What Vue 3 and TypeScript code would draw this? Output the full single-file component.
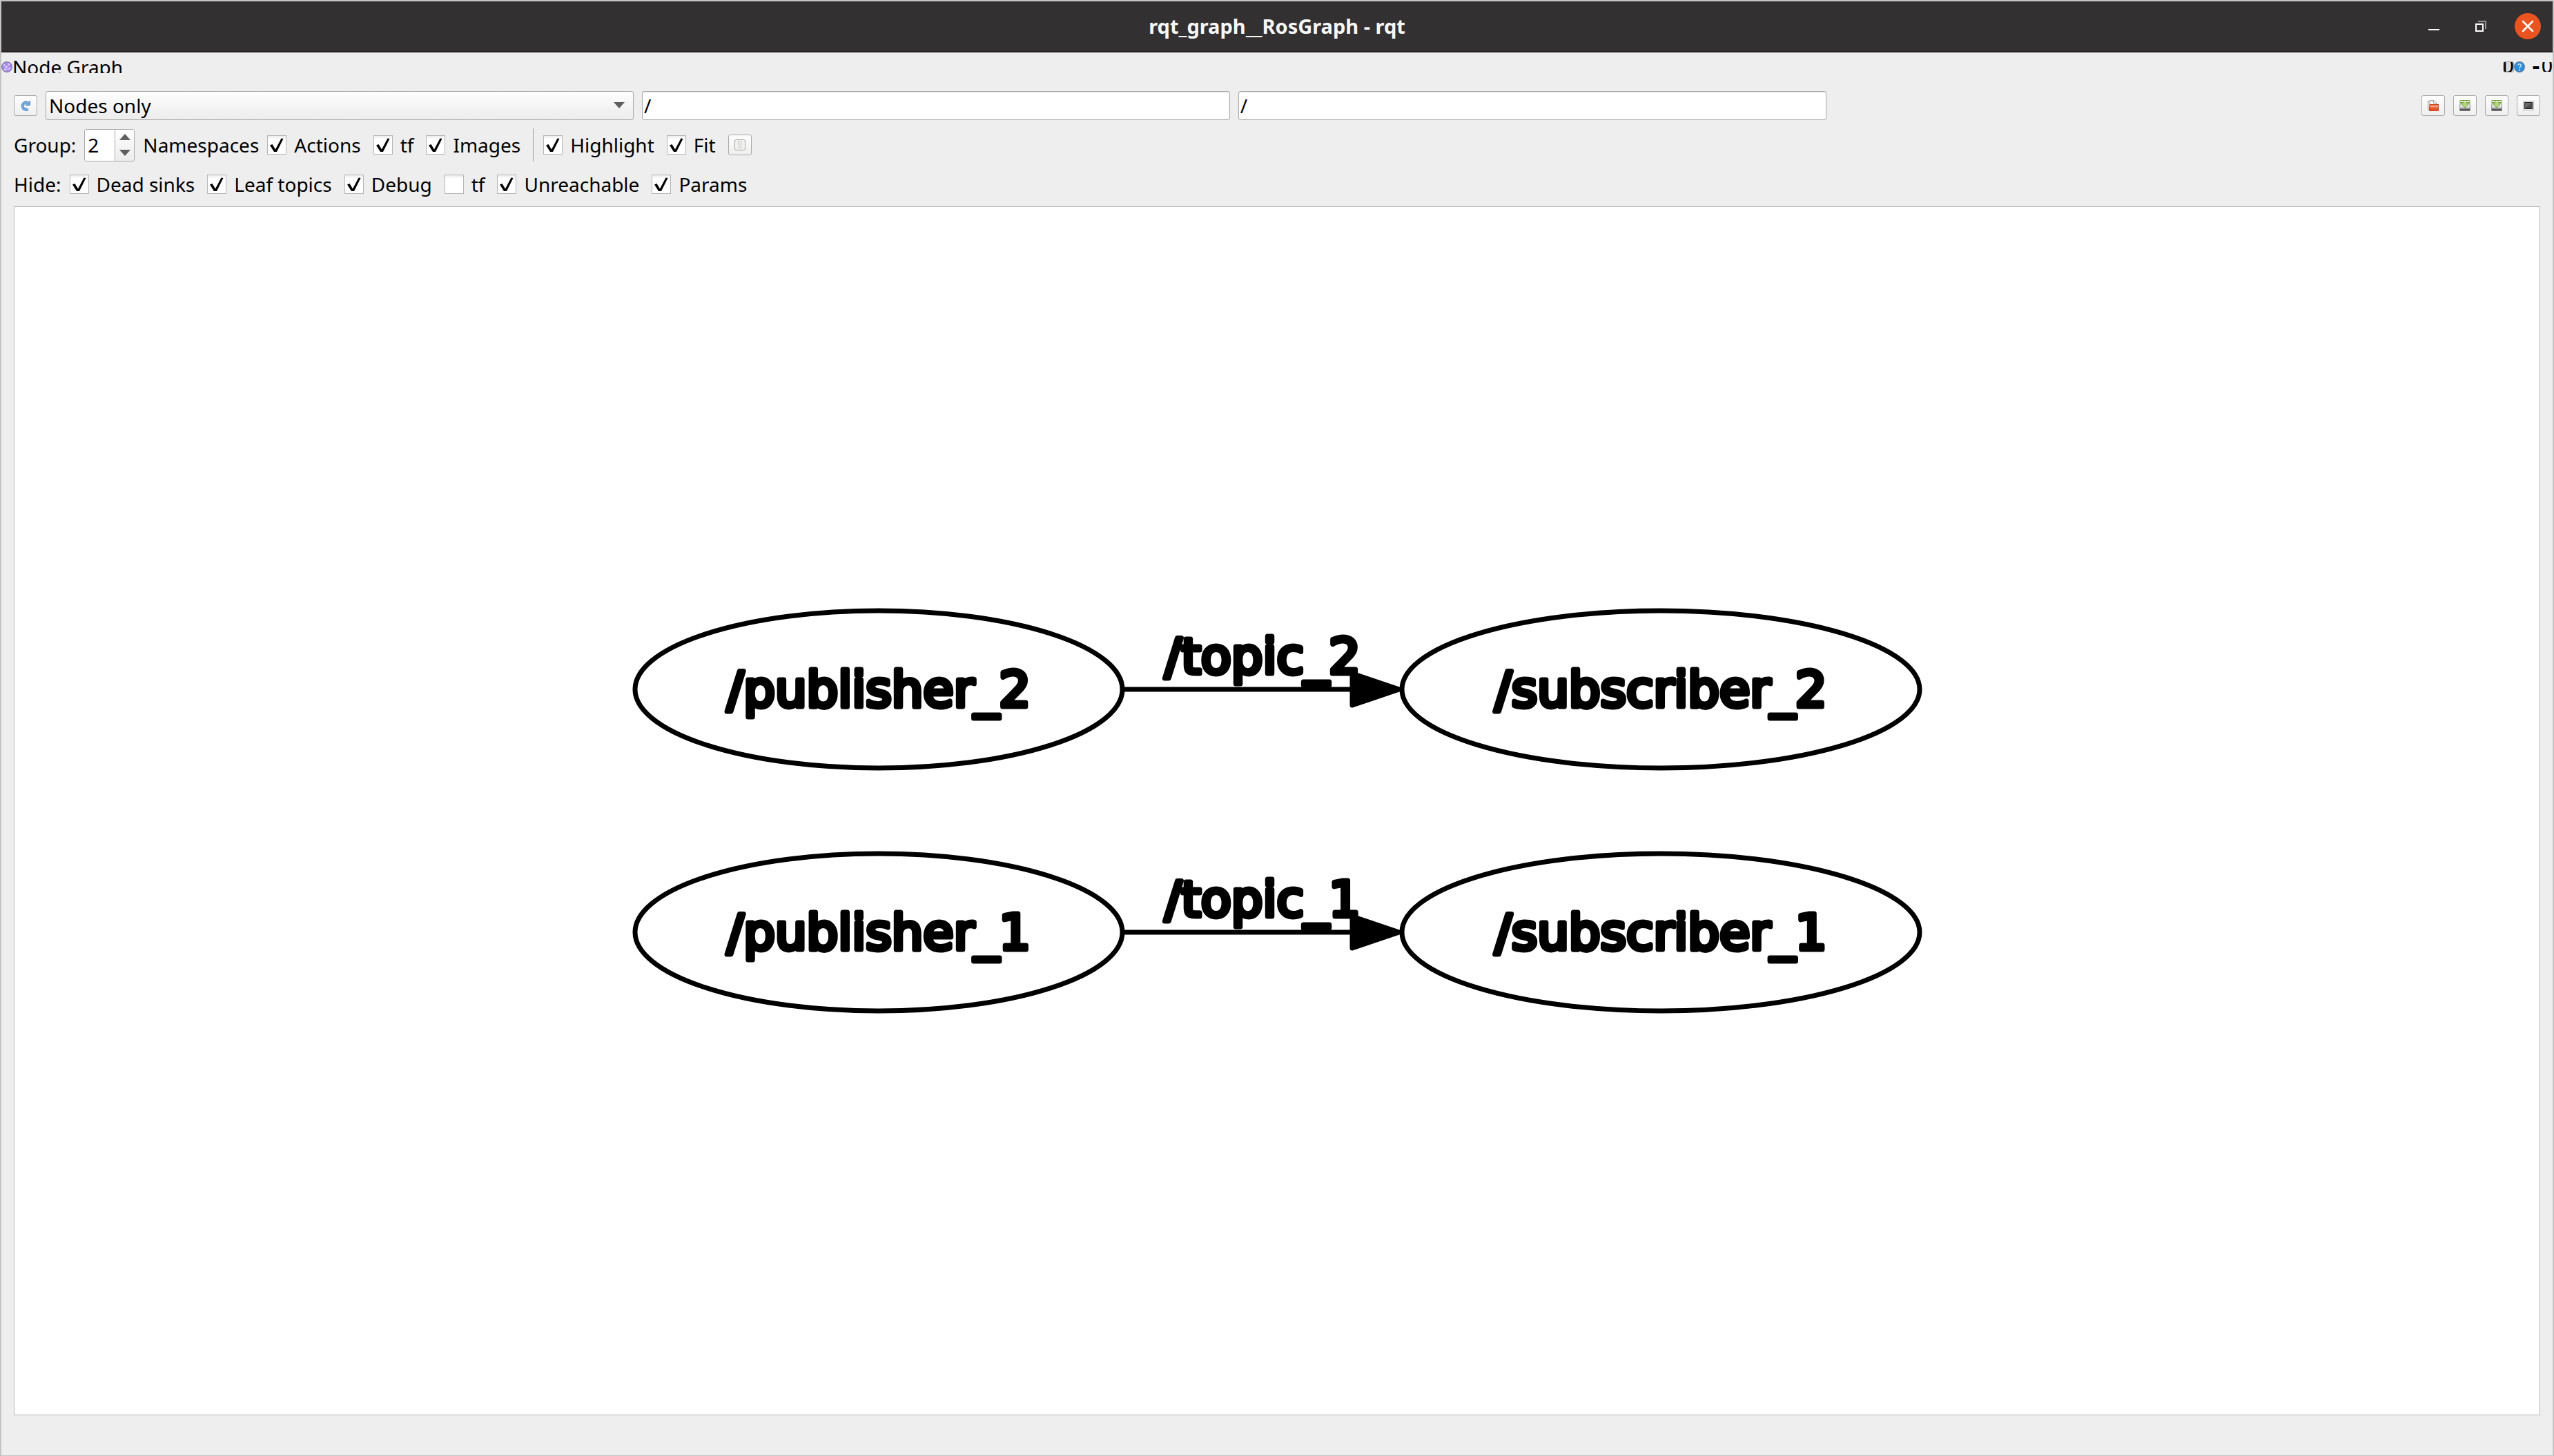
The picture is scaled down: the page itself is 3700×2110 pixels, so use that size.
<script setup lang="ts">
import { ref } from 'vue'

interface Option {
  id: string
  label: string
  checked: boolean
}

interface GraphRow {
  suffix: number
  cy: number
}

const view = ref('Nodes only')
const nodeFilter = ref('/')
const topicFilter = ref('/')
const depth = ref(2)

const groupOptions = ref<Option[]>([
  { id: 'actions', label: 'Actions', checked: true },
  { id: 'group-tf', label: 'tf', checked: true },
  { id: 'images', label: 'Images', checked: true },
])

const viewOptions = ref<Option[]>([
  { id: 'highlight', label: 'Highlight', checked: true },
  { id: 'fit', label: 'Fit', checked: true },
])

const hideOptions = ref<Option[]>([
  { id: 'dead-sinks', label: 'Dead sinks', checked: true },
  { id: 'leaf-topics', label: 'Leaf topics', checked: true },
  { id: 'debug', label: 'Debug', checked: true },
  { id: 'hide-tf', label: 'tf', checked: false },
  { id: 'unreachable', label: 'Unreachable', checked: true },
  { id: 'params', label: 'Params', checked: true },
])

const rows: GraphRow[] = [
  { suffix: 2, cy: 699 },
  { suffix: 1, cy: 1051 },
]
</script>

<template>
  <div class="window">
    <header class="titlebar">
      <h1>rqt_graph__RosGraph - rqt</h1>
      <div class="window-buttons">
        <button type="button" aria-label="Minimize">
          <svg width="38" height="38" viewBox="0 0 38 38"><path d="M11 23h16v2H11z" fill="#fff" /></svg>
        </button>
        <button type="button" aria-label="Restore">
          <svg width="38" height="38" viewBox="0 0 38 38">
            <path d="M15 12h11v11" fill="none" stroke="#969595" stroke-width="2" />
            <path d="M12 16h10v10H12z" fill="none" stroke="#fff" stroke-width="2" />
          </svg>
        </button>
        <button type="button" aria-label="Close">
          <svg width="38" height="38" viewBox="0 0 38 38">
            <circle cx="19" cy="19" r="19" fill="#e95420" />
            <path d="M12 12l14 14M26 12L12 26" stroke="#fff" stroke-width="2.6" stroke-linecap="round" />
          </svg>
        </button>
      </div>
    </header>

    <div class="dock">
      <svg class="dock-icon" width="16" height="16" viewBox="0 0 16 16">
        <circle cx="8" cy="8" r="7.4" fill="#a98bec" stroke="#8a80a8" stroke-width="1.2" />
        <path d="M3 5l4 3 5-4M7 8l-3 4M7 8l5 3M4 12l8-1" stroke="#d9c8fb" fill="none" />
        <g fill="#efe8ff">
          <circle cx="4" cy="5" r="1" /><circle cx="11" cy="4" r="1" /><circle cx="7" cy="8" r="1.3" />
          <circle cx="12" cy="10" r="1" /><circle cx="5" cy="12" r="1" />
        </g>
      </svg>
      <h2>Node Graph</h2>
      <div class="dock-buttons">
        <button type="button" class="framed">D</button>
        <button type="button" aria-label="Help">
          <svg width="16" height="16" viewBox="0 0 16 16">
            <circle cx="8" cy="8" r="7.4" fill="#2a8fdd" stroke="#5c7f9c" stroke-width="1.2" />
            <path d="M5.6 5.6Q6 3.8 8 3.8t2.4 2q0 1.300-1.300 2T8 10" fill="none" stroke="#d8ecfb" stroke-width="1.4" />
            <circle cx="8" cy="12.200" r="1" fill="#d8ecfb" />
          </svg>
        </button>
        <button type="button" class="dash">-</button>
        <button type="button" class="plain">O</button>
      </div>
    </div>

    <main>
      <div class="row filters">
        <button type="button" class="tool" aria-label="Refresh">
          <svg width="16" height="16" viewBox="0 0 16 16">
            <path d="M11 4A5 5.200 0 1 0 11.500 13" fill="none" stroke="#4f8ac6" stroke-width="4" />
            <path d="M11 4A5 5.200 0 1 0 11.500 13" fill="none" stroke="#7fb0e0" stroke-width="2" />
            <path d="M8 7.500h6.500V1z" fill="#78a9da" stroke="#4f8ac6" />
          </svg>
        </button>
        <div class="combo">
          <select v-model="view" aria-label="Graph type">
            <option>Nodes only</option>
            <option>Nodes/Topics (active)</option>
            <option>Nodes/Topics (all)</option>
          </select>
          <svg width="16" height="9" viewBox="0 0 16 9"><path d="M0 0h16L8 9z" fill="#5f5f5f" /></svg>
        </div>
        <input v-model="nodeFilter" class="text" type="text" aria-label="Node filter" />
        <input v-model="topicFilter" class="text" type="text" aria-label="Topic filter" />
        <div class="file-tools">
          <button type="button" class="tool" aria-label="Open graph">
            <svg width="16" height="16" viewBox="0 0 16 16">
              <path d="M.5 1.500h8v12h-8z" fill="#e8e8e8" stroke="#a3a3a3" />
              <path d="M3 .5h6l4 4v9H3z" fill="#f8f8f8" stroke="#a3a3a3" />
              <path d="M8.500.5v4H13" fill="none" stroke="#a3a3a3" />
              <path d="M2.500 15.500l.5-9h13l-.5 9z" fill="#e4572a" stroke="#c43f16" />
              <path d="M3.500 7.500h11.500l-.2 3H3.300z" fill="#f3a07e" />
            </svg>
          </button>
          <button v-for="n in 2" :key="n" type="button" class="tool" :aria-label="n === 1 ? 'Save as DOT' : 'Save as SVG'">
            <svg width="16" height="16" viewBox="0 0 16 16">
              <path d="M1.500 1.500h13l1 9v5H.5v-5z" fill="#e2e2e2" stroke="#8f8f8f" />
              <path d="M1 12h14v3.500H1z" fill="#5a5a5a" />
              <path d="M1 10.500h14v2H1z" fill="#b5b5b5" />
              <path d="M1 .5h14v3H11v1.500h2.500L8 11 2.500 5H5V3.500H1z" fill="#b4d67a" stroke="#6f9c37" />
              <path d="M1.500 1h13v2h-13z" fill="#f3f8ea" />
              <path d="M6 1v2M10 1v2" stroke="#6f9c37" />
            </svg>
          </button>
          <button type="button" class="tool" aria-label="Save as image">
            <svg width="16" height="16" viewBox="0 0 16 16">
              <path d="M.5 1.500h15v13H.5z" fill="#f4f4f4" stroke="#b0b0b0" />
              <path d="M2.500 3.500h11v9h-11z" fill="#4b4b4b" stroke="#202020" />
              <path d="M3 12V4h10z" fill="#666" />
            </svg>
          </button>
        </div>
      </div>

      <div class="row grouping">
        <label for="depth">Group:</label>
        <div class="spin">
          <input id="depth" v-model.number="depth" type="number" />
          <div class="steps">
            <button type="button" aria-label="Increase" @click="depth++">
              <svg width="16" height="9" viewBox="0 0 16 9"><path d="M0 9h16L8 0z" fill="#5f5f5f" /></svg>
            </button>
            <button type="button" aria-label="Decrease" @click="depth--">
              <svg width="16" height="9" viewBox="0 0 16 9"><path d="M0 0h16L8 9z" fill="#5f5f5f" /></svg>
            </button>
          </div>
        </div>
        <span class="namespaces">Namespaces</span>
        <div class="options">
          <label v-for="o in groupOptions" :key="o.id" class="check">
            <span class="box">
              <input v-model="o.checked" type="checkbox" />
              <svg v-if="o.checked" width="28" height="28" viewBox="0 0 28 28"><path d="M4 14.500l3.500-1.500 4.500 7.500L20.500 4.500l3 .5L14 24h-4z" /></svg>
            </span>
            {{ o.label }}
          </label>
        </div>
        <span class="divider"></span>
        <div class="options">
          <label v-for="o in viewOptions" :key="o.id" class="check">
            <span class="box">
              <input v-model="o.checked" type="checkbox" />
              <svg v-if="o.checked" width="28" height="28" viewBox="0 0 28 28"><path d="M4 14.500l3.500-1.500 4.500 7.500L20.500 4.500l3 .5L14 24h-4z" /></svg>
            </span>
            {{ o.label }}
          </label>
          <button type="button" class="tool" aria-label="Fit in view">
            <svg width="16" height="16" viewBox="0 0 16 16">
              <rect x=".5" y=".5" width="15" height="15" rx="2.500" fill="#f1f1f0" stroke="#a5a5a2" />
              <path d="M5.500 5.500v-2h4v9h-2.500v-7z" fill="#fff" stroke="#b9b9b6" />
            </svg>
          </button>
        </div>
      </div>

      <div class="row hiding">
        <span>Hide:</span>
        <div class="options">
          <label v-for="o in hideOptions" :key="o.id" class="check">
            <span class="box">
              <input v-model="o.checked" type="checkbox" />
              <svg v-if="o.checked" width="28" height="28" viewBox="0 0 28 28"><path d="M4 14.500l3.500-1.500 4.500 7.500L20.500 4.500l3 .5L14 24h-4z" /></svg>
            </span>
            {{ o.label }}
          </label>
        </div>
      </div>

      <section class="canvas" aria-label="Node graph">
        <svg viewBox="0 0 3658 1750">
          <g v-for="r in rows" :key="r.suffix">
            <ellipse class="line" cx="1252" :cy="r.cy" rx="353" ry="114" />
            <ellipse class="line" cx="2385" :cy="r.cy" rx="375" ry="114" />
            <path class="line" :d="`M1605 ${r.cy}H1940`" />
            <path class="head" :d="`M1938 ${r.cy - 23}v46l68 -23z`" />
            <text x="1252" :y="r.cy + 25">/publisher_{{ r.suffix }}</text>
            <text x="2385" :y="r.cy + 25">/subscriber_{{ r.suffix }}</text>
            <text x="1808" :y="r.cy - 23">/topic_{{ r.suffix }}</text>
          </g>
        </svg>
      </section>
    </main>
  </div>
</template>

<style>
body {
  margin: 0;
}
</style>

<style scoped>
.window {
  box-sizing: border-box;
  display: flex;
  flex-direction: column;
  min-height: 100vh;
  border: 2px solid #c4c4c4;
  background: #eee;
  color: #000;
  font-family: 'Noto Sans', 'Open Sans', sans-serif;
  font-size: 28px;
  line-height: 36px;
}

button,
input,
select {
  box-sizing: border-box;
  margin: 0;
  padding: 0;
  border: 0;
  background: none;
  color: inherit;
  font: inherit;
}

svg {
  display: block;
}

.titlebar {
  display: grid;
  grid-template-columns: 1fr auto 1fr;
  align-items: center;
  height: 72px;
  border-bottom: 2px solid #231f20;
  background: #333031;
  color: #f7f7f7;
}

.titlebar h1 {
  grid-column: 2;
  margin: 0;
  font-size: 29px;
  font-weight: 700;
}

.window-buttons {
  display: flex;
  justify-content: flex-end;
  gap: 30px;
  padding-right: 17px;
}

.dock {
  display: flex;
  align-items: center;
  height: 18px;
  margin-top: 12px;
  overflow: hidden;
}

.dock h2 {
  margin: 0 auto 0 0;
  font-size: 28px;
  font-weight: 400;
  line-height: 18px;
}

.dock-buttons {
  display: flex;
  align-items: center;
  font-family: 'DejaVu Sans Mono', monospace;
}

.dock-buttons button {
  display: flex;
  align-items: center;
  justify-content: center;
  width: 16px;
  height: 16px;
  overflow: hidden;
  line-height: 16px;
}

.dock-buttons .framed {
  border: 1px solid #a9a9a9;
  border-radius: 3px;
  background: #dcdcdc;
}

.dock-buttons .dash {
  width: 24px;
  padding-left: 8px;
  font-weight: 700;
}

.dock-buttons .plain {
  height: 14px;
}

main {
  display: flex;
  flex: 1;
  flex-direction: column;
  gap: 12px;
  padding: 26px 18px 58px;
}

.row {
  display: flex;
  align-items: center;
  gap: 12px;
}

.filters {
  display: grid;
  grid-template-columns: 34px 5fr 5fr 5fr 6fr;
  height: 42px;
}

.grouping {
  height: 48px;
}

.hiding {
  height: 41px;
}

.tool {
  display: grid;
  flex: none;
  place-items: center;
  width: 34px;
  height: 30px;
  border: 1px solid #a9a9a9;
  border-radius: 3px;
  background: linear-gradient(#fdfdfd, #efefef);
}

.combo,
.text {
  min-width: 0;
  height: 42px;
}

.combo {
  position: relative;
}

.combo select {
  width: 100%;
  height: 42px;
  padding-left: 4px;
  border: 1px solid #a9a9a9;
  border-radius: 3px;
  appearance: none;
  background: linear-gradient(#fefefe, #ececec);
}

.combo svg {
  position: absolute;
  top: 16px;
  right: 13px;
  pointer-events: none;
}

.text {
  padding-left: 2px;
  border: 1px solid #a9a9a9;
  border-radius: 3px;
  background: #fff;
  box-shadow: inset 0 1px 1px #e4e4e4;
}

.file-tools {
  display: flex;
  gap: 12px;
  justify-content: flex-end;
}

.spin {
  box-sizing: border-box;
  display: flex;
  width: 73px;
  height: 47px;
  overflow: hidden;
  border: 1px solid #a9a9a9;
  border-radius: 3px;
}

.spin input {
  width: 43px;
  padding-left: 4px;
  background: #fff;
  appearance: textfield;
}

.spin input::-webkit-inner-spin-button {
  appearance: none;
}

.steps {
  display: grid;
  flex: 1;
  border-left: 1px solid #a9a9a9;
  background: linear-gradient(#fefefe, #ececec);
}

.steps button {
  display: grid;
  place-items: center;
}

.options {
  display: flex;
  align-items: center;
  gap: 18px;
}

.check {
  display: flex;
  align-items: center;
  gap: 11px;
}

.box {
  display: grid;
  width: 28px;
  height: 28px;
}

.box input {
  grid-area: 1 / 1;
  width: 28px;
  height: 28px;
  border: 1px solid #b6b6b6;
  appearance: none;
  background: linear-gradient(#ececec, #fff 5px);
}

.box svg {
  grid-area: 1 / 1;
  z-index: 1;
  fill: #000;
  pointer-events: none;
}

.divider {
  width: 1px;
  height: 48px;
  margin: 0 2px 0 6px;
  background: #a5a5a5;
}

.canvas {
  display: grid;
  flex: 1;
  min-height: 0;
  border: 1px solid #b4b4b4;
  background: #fff;
}

.canvas svg {
  width: 100%;
  height: 100%;
}

.line {
  fill: none;
  stroke: #000;
  stroke-width: 7px;
}

.head,
.canvas text {
  fill: #000;
  stroke: #000;
  stroke-width: 7px;
  stroke-linejoin: round;
}

.canvas text {
  font-family: 'DejaVu Sans', sans-serif;
  font-size: 72px;
  text-anchor: middle;
}
</style>
